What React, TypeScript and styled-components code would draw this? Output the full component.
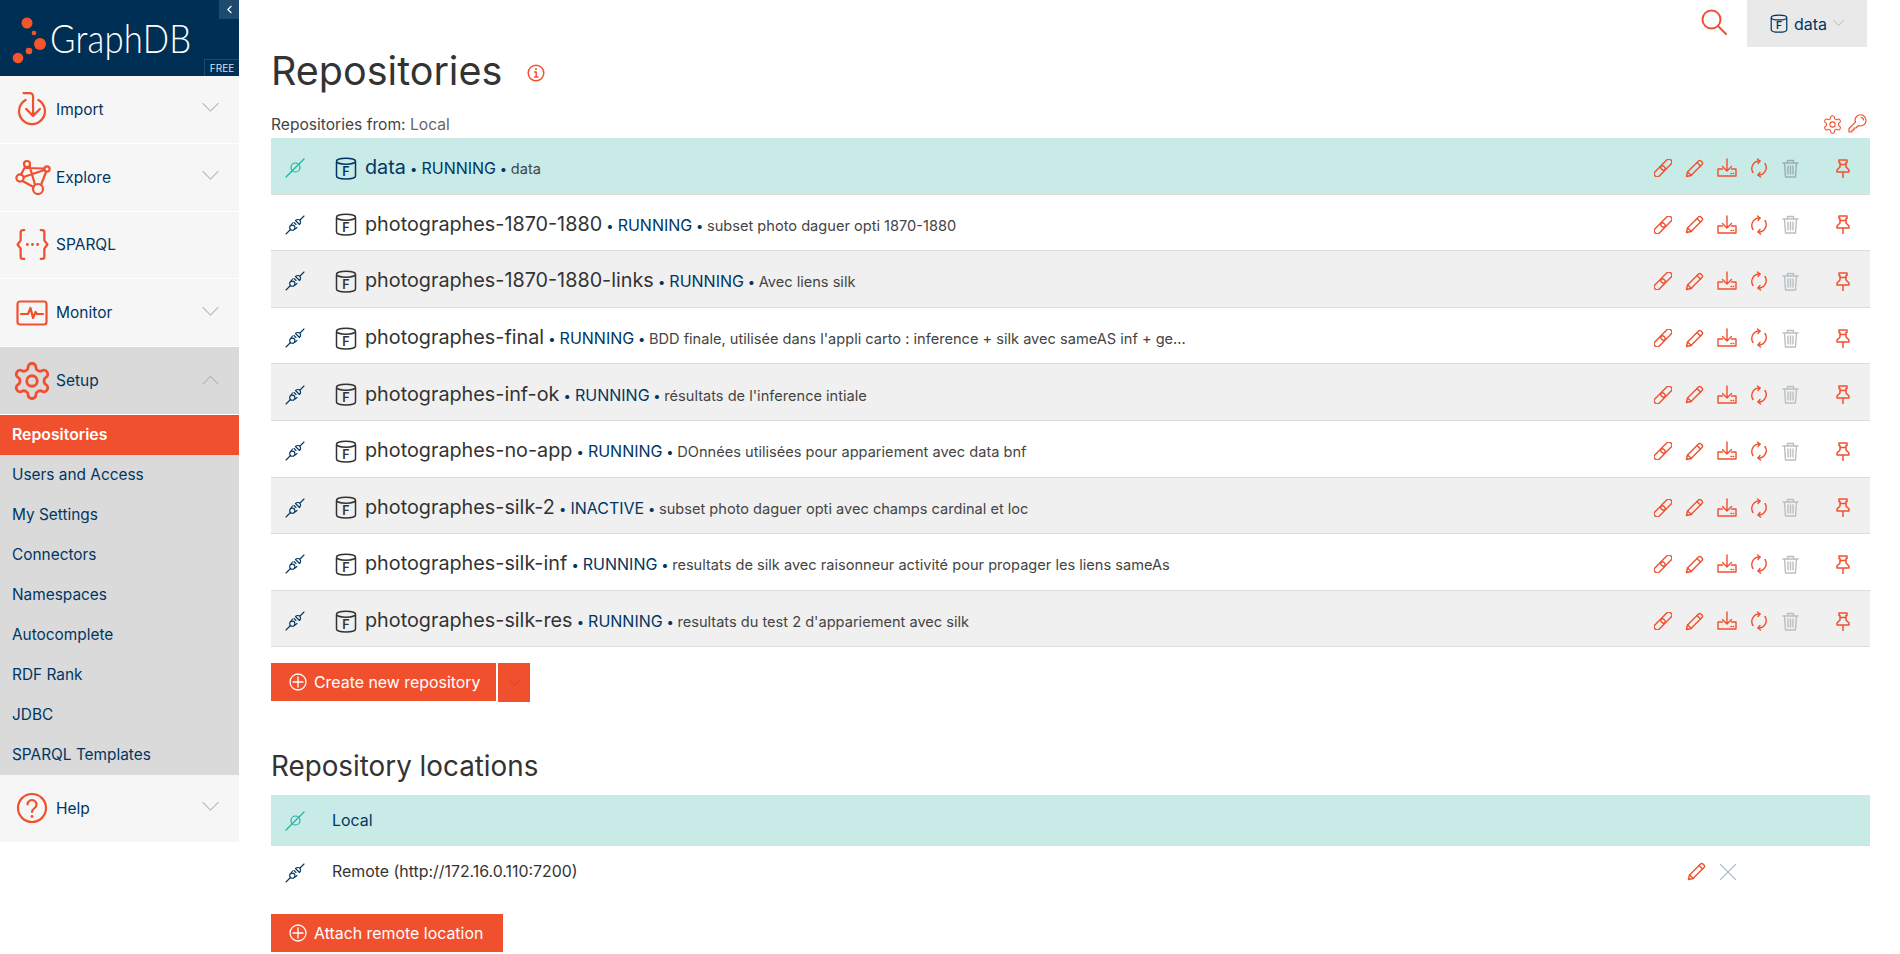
import styled, { createGlobalStyle } from 'styled-components';
import { ChevronLeft, X } from 'lucide-react';

const ORANGE = '#f1502f';
const NAVY = '#003663';
const TEAL = '#c9ebe7';
const FONT = 'Inter, "Noto Sans", sans-serif';

const Global = createGlobalStyle`
  html, body { margin: 0; padding: 0; background: #fff; overflow: hidden; }
  body { font-family: ${FONT}; color: #333; }
  * { box-sizing: border-box; }
`;

const Page = styled.div`
  display: flex;
  width: 1900px;
  height: 954px;
  overflow: hidden;
`;

const Sidebar = styled.aside`
  width: 239px;
  flex: none;
`;

const Brand = styled.div`
  position: relative;
  height: 76px;
  background: #002f55;
  display: flex;
  align-items: center;
  padding: 5px 0 0 12px;
`;

const BrandName = styled.span`
  font-family: Lato, sans-serif;
  font-weight: 300;
  font-size: 39px;
  color: #fff;
  margin: -6px 0 0 1px;
  letter-spacing: 0.2px;
  display: inline-block;
  transform: scaleX(0.89);
  transform-origin: left center;
`;

const Collapse = styled.div`
  position: absolute;
  top: 0;
  right: 0;
  width: 20px;
  height: 19px;
  background: #1d4a6e;
  color: #fff;
  display: flex;
  align-items: center;
  justify-content: center;
`;

const FreeTag = styled.span`
  position: absolute;
  right: 0;
  bottom: 0;
  width: 35px;
  height: 17px;
  border: 1px solid #1d4a6e;
  border-right: 0;
  border-bottom: 0;
  color: #d8e2ea;
  font-size: 10px;
  line-height: 16px;
  text-align: center;
`;

const MenuItem = styled.div<{ $open?: boolean }>`
  height: 67.8px;
  display: flex;
  align-items: center;
  position: relative;
  padding-left: 56px;
  background: ${(p) => (p.$open ? '#dadada' : '#f6f6f6')};
  border-bottom: 1px solid #fff;
  color: ${NAVY};
  font-size: 15.5px;
`;

const MenuIcon = styled.span`
  position: absolute;
  left: 12px;
  top: 50%;
  transform: translateY(-50%);
  width: 40px;
  height: 42px;
  display: flex;
  align-items: center;
  justify-content: center;
`;

const Caret = styled.span`
  position: absolute;
  right: 20px;
  top: 50%;
  margin-top: -6px;
  display: flex;
`;

const SubMenu = styled.div`
  background: #dadada;
`;

const SubItem = styled.div<{ $active?: boolean }>`
  height: 40px;
  display: flex;
  align-items: center;
  padding-left: 12px;
  font-size: ${(p) => (p.$active ? '15.8px' : '15.4px')};
  color: ${(p) => (p.$active ? '#fff' : NAVY)};
  background: ${(p) => (p.$active ? ORANGE : 'transparent')};
  font-weight: ${(p) => (p.$active ? 600 : 400)};
`;

const Main = styled.main`
  width: 1631px;
  padding-left: 32px;
  flex: none;
`;

const TopBar = styled.div`
  height: 47px;
  display: flex;
  justify-content: flex-end;
  align-items: center;
  padding-right: 3px;
`;

const SearchButton = styled.span`
  display: flex;
  margin-right: 19px;
  margin-top: -4px;
`;

const RepoPicker = styled.div`
  width: 120px;
  height: 47px;
  background: #e9e9e9;
  display: flex;
  align-items: center;
  padding-left: 23px;
  gap: 6px;
  color: ${NAVY};
  font-size: 16px;
`;

const TitleRow = styled.div`
  display: flex;
  align-items: center;
  gap: 25px;
  height: 46px;
  padding-top: 2px;
`;

const Title = styled.h1`
  margin: 0;
  font-weight: 400;
  font-size: 39.5px;
  color: #333;
`;

const InfoSlot = styled.span`
  display: flex;
  margin-top: 3px;
`;

const FromRow = styled.div`
  height: 45px;
  display: flex;
  align-items: flex-end;
  justify-content: space-between;
  font-size: 15.6px;
  padding-bottom: 4px;
  padding-right: 3px;
`;

const FromText = styled.span`
  color: #444;
  & b { font-weight: 400; color: #666; }
`;

const Tools = styled.span`
  display: flex;
  gap: 5px;
  margin-bottom: -1px;
`;

const Row = styled.div<{ $kind: 'active' | 'plain' | 'shade'; $tall?: boolean; $last?: boolean }>`
  height: ${(p) => (p.$tall ? '51px' : '56.6px')};
  display: flex;
  align-items: center;
  padding-top: ${(p) => (p.$tall ? 0 : '3px')};
  background: ${(p) => (p.$kind === 'active' ? TEAL : p.$kind === 'shade' ? '#f0f0f0' : '#fff')};
  border-bottom: ${(p) => (p.$last ? '0' : '1px solid #dcdcdc')};
  color: ${(p) => (p.$kind === 'active' ? NAVY : '#333')};
`;

const Plug = styled.span`
  width: 48px;
  flex: none;
  display: flex;
  justify-content: center;
  margin-top: 2px;
`;

const RepoIcon = styled.span`
  margin: 2px 0 0 16px;
  width: 22px;
  flex: none;
  display: flex;
`;

const RepoText = styled.div`
  flex: 1;
  margin-left: 8px;
  white-space: nowrap;
  overflow: hidden;
`;

const RepoName = styled.span`
  font-size: 19.8px;
`;

const Status = styled.span`
  font-size: 16px;
  color: ${NAVY};
`;

const Desc = styled.span`
  font-size: 14.6px;
  color: #444;
`;

const Dot = styled.span`
  font-size: 13px;
  margin: 0 -0.4px;
  color: ${NAVY};
`;

const Actions = styled.div`
  display: flex;
  align-items: center;
  flex: none;
  padding-right: 11px;
  margin-top: 2px;
`;

const ActionSlot = styled.span`
  width: 31.8px;
  display: flex;
  justify-content: center;
`;

const PinSlot = styled(ActionSlot)`
  margin-left: 21px;
`;

const ButtonRow = styled.div`
  display: flex;
  gap: 2px;
  margin-top: 16px;
`;

const Button = styled.div<{ $w: number }>`
  width: ${(p) => p.$w}px;
  height: 38px;
  background: ${ORANGE};
  color: #fff;
  font-size: 15.9px;
  display: flex;
  align-items: center;
  padding-left: 18px;
  gap: 7px;
`;

const SplitCaret = styled.div`
  width: 32px;
  height: 39px;
  background: ${ORANGE};
  display: flex;
  align-items: center;
  justify-content: center;
`;

const SubTitle = styled.h2`
  margin: 43px 0 0;
  height: 50px;
  font-weight: 400;
  font-size: 27.8px;
  color: #333;
  line-height: 42px;
`;

const LocationName = styled.div`
  flex: 1;
  margin-left: 13px;
  font-size: 15.9px;
`;

const LocationActions = styled.div`
  display: flex;
  align-items: center;
  gap: 7.5px;
  padding-right: 127px;
  color: #aebcc5;
`;

const Spacer = styled.div`
  height: 17px;
`;

const Ico = styled.svg.attrs({ fill: 'none', strokeLinecap: 'round', strokeLinejoin: 'round' })`
  display: block;
  flex: none;
`;

const ExploreSvg = styled(Ico)`
  margin-left: 2px;
`;

const Chevron = ({ up, w = 17, color = '#bdbdbd' }: { up?: boolean; w?: number; color?: string }) => (
  <Ico width={w} height={w / 2 + 1} viewBox="0 0 18 10" stroke={color} strokeWidth="1.2">
    <path d={up ? 'M1 9.5 9 1.5l8 8' : 'M1 .5l8 8 8-8'} />
  </Ico>
);

const LogoMark = () => (
  <Ico width="37" height="50" viewBox="0 0 37 50">
    <g fill="#f4552a" stroke="none">
      <circle cx="15" cy="7" r="5.5" />
      <circle cx="22" cy="17" r="2.3" />
      <circle cx="28" cy="28" r="6" />
      <circle cx="17" cy="35" r="3.3" />
      <circle cx="6" cy="42" r="5.3" />
    </g>
  </Ico>
);

const ImportIcon = () => (
  <Ico width="32" height="36" viewBox="0 0 30 34" stroke={ORANGE} strokeWidth="2.1">
    <path d="M9 8.5a12.2 12.2 0 1 0 12 0" />
    <path d="M7 2h6a3 3 0 0 1 3 3v18M9.5 17l6.5 6.5 6.5-6.5" />
  </Ico>
);

const ExploreIcon = () => (
  <ExploreSvg width="36" height="36" viewBox="0 0 36 36" stroke={ORANGE} strokeWidth="2.2">
    <circle cx="12" cy="5" r="3" />
    <circle cx="5" cy="19" r="3.6" />
    <circle cx="32" cy="10" r="2.6" />
    <circle cx="23" cy="30" r="5" />
    <path d="M10 8 6 15.5M14.5 7 20 25.5M29.5 11 8.5 18M31 13l-5 13M7.5 22l11 6M11 9l18 .5" />
  </ExploreSvg>
);

const SparqlIcon = () => (
  <Ico width="35" height="33" viewBox="0 0 34 32" stroke={ORANGE} strokeWidth="2.2">
    <path d="M9 2H7.5a2 2 0 0 0-2 2v8l-3 4 3 4v8a2 2 0 0 0 2 2H9M25 2h1.5a2 2 0 0 1 2 2v8l3 4-3 4v8a2 2 0 0 1-2 2H25" />
    <path d="M12 16h.01M17 16h.01M22 16h.01" strokeWidth="2.8" />
  </Ico>
);

const MonitorIcon = () => (
  <Ico width="32" height="26" viewBox="0 0 32 26" stroke={ORANGE} strokeWidth="2.2">
    <rect x="1.5" y="1.5" width="29" height="23" rx="2.5" />
    <path d="M5 14h7l2.5-6 2.5 10 2.5-6 1.5 2h6" />
  </Ico>
);

const GearIcon = ({ w, size, color }: { w: number; size: number; color: string }) => (
  <Ico width={size} height={size} viewBox="0 0 24 24" stroke={color} strokeWidth={w}>
    <path d="M12.22 2h-.44a2 2 0 0 0-2 2v.18a2 2 0 0 1-1 1.73l-.43.25a2 2 0 0 1-2 0l-.15-.08a2 2 0 0 0-2.73.73l-.22.38a2 2 0 0 0 .73 2.73l.15.1a2 2 0 0 1 1 1.72v.51a2 2 0 0 1-1 1.74l-.15.09a2 2 0 0 0-.73 2.73l.22.38a2 2 0 0 0 2.73.73l.15-.08a2 2 0 0 1 2 0l.43.25a2 2 0 0 1 1 1.73V20a2 2 0 0 0 2 2h.44a2 2 0 0 0 2-2v-.18a2 2 0 0 1 1-1.73l.43-.25a2 2 0 0 1 2 0l.15.08a2 2 0 0 0 2.73-.73l.22-.39a2 2 0 0 0-.73-2.73l-.15-.08a2 2 0 0 1-1-1.74v-.5a2 2 0 0 1 1-1.74l.15-.09a2 2 0 0 0 .73-2.73l-.22-.38a2 2 0 0 0-2.73-.73l-.15.08a2 2 0 0 1-2 0l-.43-.25a2 2 0 0 1-1-1.73V4a2 2 0 0 0-2-2z" />
    <circle cx="12" cy="12" r="3" />
  </Ico>
);

const HelpIcon = () => (
  <Ico width="32" height="32" viewBox="0 0 32 32" stroke={ORANGE} strokeWidth="2.2">
    <circle cx="16" cy="16" r="14" />
    <path d="M11.5 12.5a4.5 4.5 0 1 1 6.8 3.9c-1.5.9-2.3 1.7-2.3 3.6" />
    <path d="M16 24.5h.01" strokeWidth="2.8" />
  </Ico>
);

const PlugIcon = ({ on }: { on: boolean }) =>
  on ? (
    <Ico width="20" height="20" viewBox="0 0 20 20" stroke="#1ab5a3" strokeWidth="1.2">
      <path d="M1 19 19 1" />
      <circle cx="10.5" cy="9.5" r="4.5" />
    </Ico>
  ) : (
    <Ico width="20" height="20" viewBox="0 0 20 20" stroke={NAVY} strokeWidth="1.1">
      <path d="M1 19l4.5-4.5M15 5l4-4" />
      <circle cx="7.3" cy="12.7" r="2.6" />
      <path d="M10.5 5.5l4 4c1-1 1.5-2.5.5-4s-3.3-1.2-4.5 0zM6 10l1.5-2M10 14l2-1.5M9 7.5l2 2" />
    </Ico>
  );

const CylinderIcon = ({ color, size = 22 }: { color: string; size?: number }) => (
  <Ico width={size} height={size + 1} viewBox="0 0 22 23" stroke={color} strokeWidth="1.5">
    <path d="M1.5 5v14c0 1.7 4 3 9.5 3s9.500-1.3 9.5-3V5" />
    <ellipse cx="11" cy="4.2" rx="9.5" ry="3" />
    <text x="11" y="18.5" textAnchor="middle" fontFamily={FONT} fontSize="12.5" fontWeight="600" fill={color} stroke="none">
      F
    </text>
  </Ico>
);

const InfoIcon = () => (
  <Ico width="18" height="18" viewBox="0 0 18 18" stroke={ORANGE} strokeWidth="1.5">
    <circle cx="9" cy="9" r="7.8" />
    <path d="M7.5 8H9.2v5M7.5 13h3.5" />
    <path d="M9 5h.01" strokeWidth="2" />
  </Ico>
);

const SearchIcon = () => (
  <Ico width="28" height="28" viewBox="0 0 28 28" stroke={ORANGE} strokeWidth="2">
    <circle cx="11.5" cy="11.5" r="9" />
    <path d="M18 18l8 8" />
  </Ico>
);

const KeyIcon = () => (
  <Ico width="19" height="19" viewBox="0 0 19 19" stroke={ORANGE} strokeWidth="1.2">
    <path d="M18 6.5a5.5 5.5 0 0 0-11-.5c0 .8.2 1.500.5 2.100L1 14.5V18h3v-2h2v-2h2l2.5-2.5c.6.3 1.2.5 1.9.5A5.5 5.5 0 0 0 18 6.5z" />
    <path d="M13 3.5a2.500 2.500 0 0 1 2.5 2.5" />
  </Ico>
);

const LinkIcon = () => (
  <Ico width="18" height="18" viewBox="0 0 18 18" stroke={ORANGE} strokeWidth="1.4">
    <rect x="-6.5" y="-3" width="13" height="6" rx="3" transform="translate(5.7 12.3) rotate(-45)" />
    <rect x="-6.5" y="-3" width="13" height="6" rx="3" transform="translate(12.3 5.7) rotate(-45)" />
  </Ico>
);

const PencilIcon = () => (
  <Ico width="19" height="19" viewBox="0 0 19 19" stroke={ORANGE} strokeWidth="1.4">
    <path d="M1.5 17.5l1-4.5L13.5 2a1.8 1.8 0 0 1 2.5 0l1 1a1.8 1.8 0 0 1 0 2.5L6 16.5z" />
    <path d="M2.5 13l4 3.5M12 3.5l3.5 3.5" />
  </Ico>
);

const TrayIcon = () => (
  <Ico width="20" height="20" viewBox="0 0 20 20" stroke={ORANGE} strokeWidth="1.4">
    <path d="M10 1v12M5.5 8.5 10 13l4.5-4.500" />
    <path d="M5.5 11H1v7h18v-7h-4.500" />
    <path d="M14 15.5h.5M16.2 15.5h.5" />
  </Ico>
);

const RefreshIcon = () => (
  <Ico width="18" height="20" viewBox="0 0 18 20" stroke={ORANGE} strokeWidth="1.4">
    <path d="M3 14.5A7.5 7.5 0 0 1 10 3" />
    <path d="M7.5 1 10 3 8 5.5" />
    <path d="M15 5.5A7.5 7.5 0 0 1 8 17" />
    <path d="M10.5 19 8 17l2-2.5" />
  </Ico>
);

const TrashIcon = ({ color }: { color: string }) => (
  <Ico width="17" height="19" viewBox="0 0 17 19" stroke={color} strokeWidth="1.4">
    <path d="M1 4h15M5.5 4V1.5h6V4M2.5 4l1 14h10l1-14" />
    <path d="M6 7v8M8.5 7v8M11 7v8" />
  </Ico>
);

const PinIcon = () => (
  <Ico width="14" height="19" viewBox="0 0 14 19" stroke={ORANGE} strokeWidth="1.5">
    <path d="M3 1h8v2.5H10V8l3 3v2H1v-2l3-3V3.5H3zM4 5.5h6M7 13v5.5" />
  </Ico>
);

const PlusCircle = () => (
  <Ico width="18" height="18" viewBox="0 0 18 18" stroke="#fff" strokeWidth="1.3">
    <circle cx="9" cy="9" r="8" />
    <path d="M9 4v10M4 9h10" />
  </Ico>
);

const subItems = ['Users and Access', 'My Settings', 'Connectors', 'Namespaces', 'Autocomplete', 'RDF Rank', 'JDBC', 'SPARQL Templates'];

const repos = [
  { name: 'data', status: 'RUNNING', desc: 'data', active: true },
  { name: 'photographes-1870-1880', status: 'RUNNING', desc: 'subset photo daguer opti 1870-1880' },
  { name: 'photographes-1870-1880-links', status: 'RUNNING', desc: 'Avec liens silk' },
  { name: 'photographes-final', status: 'RUNNING', desc: "BDD finale, utilisée dans l'appli carto : inference + silk avec sameAS inf + ge..." },
  { name: 'photographes-inf-ok', status: 'RUNNING', desc: "résultats de l'inference intiale" },
  { name: 'photographes-no-app', status: 'RUNNING', desc: 'DOnnées utilisées pour appariement avec data bnf' },
  { name: 'photographes-silk-2', status: 'INACTIVE', desc: 'subset photo daguer opti avec champs cardinal et loc' },
  { name: 'photographes-silk-inf', status: 'RUNNING', desc: 'resultats de silk avec raisonneur activité pour propager les liens sameAs' },
  { name: 'photographes-silk-res', status: 'RUNNING', desc: "resultats du test 2 d'appariement avec silk" },
];

const App = () => (
  <Page>
    <Global />
    <Sidebar>
      <Brand>
        <LogoMark />
        <BrandName>GraphDB</BrandName>
        <Collapse><ChevronLeft size={13} /></Collapse>
        <FreeTag>FREE</FreeTag>
      </Brand>
      <MenuItem>
        <MenuIcon><ImportIcon /></MenuIcon>Import
        <Caret><Chevron /></Caret>
      </MenuItem>
      <MenuItem>
        <MenuIcon><ExploreIcon /></MenuIcon>Explore
        <Caret><Chevron /></Caret>
      </MenuItem>
      <MenuItem>
        <MenuIcon><SparqlIcon /></MenuIcon>SPARQL
      </MenuItem>
      <MenuItem>
        <MenuIcon><MonitorIcon /></MenuIcon>Monitor
        <Caret><Chevron /></Caret>
      </MenuItem>
      <MenuItem $open>
        <MenuIcon><GearIcon w={1.6} size={42} color={ORANGE} /></MenuIcon>Setup
        <Caret><Chevron up color="#b5b5b5" /></Caret>
      </MenuItem>
      <SubMenu>
        <SubItem $active>Repositories</SubItem>
        {subItems.map((s) => <SubItem key={s}>{s}</SubItem>)}
      </SubMenu>
      <MenuItem>
        <MenuIcon><HelpIcon /></MenuIcon>Help
        <Caret><Chevron /></Caret>
      </MenuItem>
    </Sidebar>
    <Main>
      <TopBar>
        <SearchButton><SearchIcon /></SearchButton>
        <RepoPicker>
          <CylinderIcon color={NAVY} size={18} />
          data
          <Chevron w={11} color="#aaa" />
        </RepoPicker>
      </TopBar>
      <TitleRow>
        <Title>Repositories</Title>
        <InfoSlot><InfoIcon /></InfoSlot>
      </TitleRow>
      <FromRow>
        <FromText>Repositories from: <b>Local</b></FromText>
        <Tools>
          <GearIcon w={1.2} size={21} color={ORANGE} />
          <KeyIcon />
        </Tools>
      </FromRow>
      {repos.map((r, i) => (
        <Row key={r.name} $kind={r.active ? 'active' : i % 2 === 0 ? 'shade' : 'plain'}>
          <Plug><PlugIcon on={!!r.active} /></Plug>
          <RepoIcon><CylinderIcon color={r.active ? NAVY : '#333'} /></RepoIcon>
          <RepoText>
            <RepoName>{r.name}</RepoName>
            <Status> <Dot>•</Dot> {r.status}</Status>
            <Desc> <Dot>•</Dot> {r.desc}</Desc>
          </RepoText>
          <Actions>
            <ActionSlot><LinkIcon /></ActionSlot>
            <ActionSlot><PencilIcon /></ActionSlot>
            <ActionSlot><TrayIcon /></ActionSlot>
            <ActionSlot><RefreshIcon /></ActionSlot>
            <ActionSlot><TrashIcon color={r.active ? '#9aaeb0' : '#b9bfc2'} /></ActionSlot>
            <PinSlot><PinIcon /></PinSlot>
          </Actions>
        </Row>
      ))}
      <ButtonRow>
        <Button $w={225}><PlusCircle />Create new repository</Button>
        <SplitCaret><Chevron w={11} color="#b5452d" /></SplitCaret>
      </ButtonRow>
      <SubTitle>Repository locations</SubTitle>
      <Row $kind="active" $tall>
        <Plug><PlugIcon on /></Plug>
        <LocationName>Local</LocationName>
      </Row>
      <Row $kind="plain" $tall $last>
        <Plug><PlugIcon on={false} /></Plug>
        <LocationName>Remote (http://172.16.0.110:7200)</LocationName>
        <LocationActions>
          <PencilIcon />
          <X size={30} strokeWidth={0.9} />
        </LocationActions>
      </Row>
      <Spacer />
      <Button $w={232}><PlusCircle />Attach remote location</Button>
    </Main>
  </Page>
);

export default App;
